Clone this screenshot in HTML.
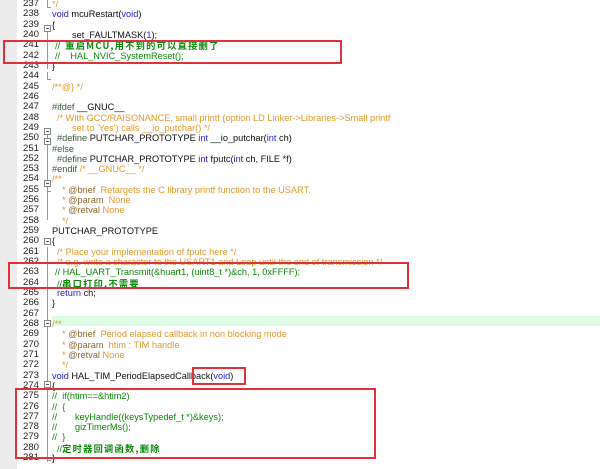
<!DOCTYPE html>
<html><head><meta charset="utf-8"><style>
html,body{margin:0;padding:0;background:#fff;}
body{width:600px;height:469px;position:relative;overflow:hidden;font-family:"Liberation Sans","Noto Sans CJK SC",sans-serif;font-size:9.2px;color:#111;}
.g{position:absolute;left:0;top:0;width:17px;height:469px;background:#ececec;}
.l{position:absolute;left:0;height:10.32px;line-height:10.32px;white-space:pre;}
.n{position:absolute;left:0;width:39px;text-align:right;color:#222;font-size:9.6px}
.c{position:absolute;}
.k{color:#1f1fd0}.o{color:#e29a2a}.gr{color:#0a8a0a}.p{color:#8a6a2a}.pp{color:#3a5a3a}
.cn{font-family:"Noto Sans CJK SC",sans-serif;font-weight:bold;letter-spacing:1.3px}
.box{position:absolute;border:2px solid #e0303a;box-sizing:border-box;}
.fb{position:absolute;left:44px;width:7px;height:7px;border:1px solid #888;box-sizing:border-box;background:#fff;}
.fb:after{content:"";position:absolute;left:1px;top:2px;width:3px;height:1px;background:#555;}
.vl{position:absolute;left:47px;width:1px;background:#999;}
</style></head><body>
<div class="g"></div>
<div style="position:absolute;left:52px;top:316px;width:548px;height:10px;background:#dcfce4"></div>
<div class="vl" style="top:0;height:8px"></div>
<div class="vl" style="top:30px;height:39px"></div>
<div class="vl" style="top:72px;height:8px"></div>
<div class="vl" style="top:133px;height:58px"></div>
<div class="vl" style="top:174px;height:46px"></div>
<div class="vl" style="top:247px;height:215px"></div>
<div style="position:absolute;left:47px;top:7px;width:4px;height:1px;background:#999"></div>
<div style="position:absolute;left:47px;top:79px;width:4px;height:1px;background:#999"></div>
<div style="position:absolute;left:47px;top:191px;width:4px;height:1px;background:#999"></div>
<div style="position:absolute;left:47px;top:460px;width:4px;height:1px;background:#999"></div>
<div class="fb" style="top:25px"></div>
<div class="fb" style="top:128px"></div>
<div class="fb" style="top:138px"></div>
<div class="fb" style="top:180px"></div>
<div class="fb" style="top:238px"></div>
<div class="fb" style="top:320px"></div>
<div class="fb" style="top:381px"></div>

<div class="l" style="top:-1px"><span class="n">237</span><span class="c o" style="left:52px">*/</span></div>
<div class="l" style="top:9.3px"><span class="n">238</span><span class="c" style="left:52px"><span class="k">void</span> mcuRestart(<span class="k">void</span>)</span></div>
<div class="l" style="top:19.6px"><span class="n">239</span><span class="c" style="left:52px">{</span></div>
<div class="l" style="top:30px"><span class="n">240</span><span class="c" style="left:72px">set_FAULTMASK(<span class="k">1</span>);</span></div>
<div class="l" style="top:40.3px"><span class="n">241</span><span class="c gr" style="left:55px">//  <span class="cn">重启MCU,用不到的可以直接删了</span></span></div>
<div class="l" style="top:50.6px"><span class="n">242</span><span class="c gr" style="left:55px">//    HAL_NVIC_SystemReset();</span></div>
<div class="l" style="top:60.9px"><span class="n">243</span><span class="c" style="left:52px">}</span></div>
<div class="l" style="top:71.2px"><span class="n">244</span></div>
<div class="l" style="top:81.6px"><span class="n">245</span><span class="c o" style="left:52px">/**@} */</span></div>
<div class="l" style="top:91.9px"><span class="n">246</span></div>
<div class="l" style="top:102.2px"><span class="n">247</span><span class="c" style="left:52px"><span class="pp">#ifdef</span> __GNUC__</span></div>
<div class="l" style="top:112.5px"><span class="n">248</span><span class="c o" style="left:57px">/* With GCC/RAISONANCE, small printf (option LD Linker-&gt;Libraries-&gt;Small printf</span></div>
<div class="l" style="top:122.8px"><span class="n">249</span><span class="c o" style="left:72px">set to 'Yes') calls __io_putchar() */</span></div>
<div class="l" style="top:133.2px"><span class="n">250</span><span class="c" style="left:57px"><span class="pp">#define</span> PUTCHAR_PROTOTYPE <span class="k">int</span> __io_putchar(<span class="k">int</span> ch)</span></div>
<div class="l" style="top:143.5px"><span class="n">251</span><span class="c pp" style="left:52px">#else</span></div>
<div class="l" style="top:153.8px"><span class="n">252</span><span class="c" style="left:57px"><span class="pp">#define</span> PUTCHAR_PROTOTYPE <span class="k">int</span> fputc(<span class="k">int</span> ch, FILE *f)</span></div>
<div class="l" style="top:164.1px"><span class="n">253</span><span class="c" style="left:52px"><span class="pp">#endif</span> <span class="o">/* __GNUC__ */</span></span></div>
<div class="l" style="top:174.4px"><span class="n">254</span><span class="c o" style="left:52px">/**</span></div>
<div class="l" style="top:184.8px"><span class="n">255</span><span class="c o" style="left:62px">* <span class="p">@brief</span>  Retargets the C library printf function to the USART.</span></div>
<div class="l" style="top:195.1px"><span class="n">256</span><span class="c o" style="left:62px">* <span class="p">@param</span>  None</span></div>
<div class="l" style="top:205.4px"><span class="n">257</span><span class="c o" style="left:62px">* <span class="p">@retval</span> None</span></div>
<div class="l" style="top:215.7px"><span class="n">258</span><span class="c o" style="left:62px">*/</span></div>
<div class="l" style="top:226px"><span class="n">259</span><span class="c" style="left:52px">PUTCHAR_PROTOTYPE</span></div>
<div class="l" style="top:236.4px"><span class="n">260</span><span class="c" style="left:52px">{</span></div>
<div class="l" style="top:246.7px"><span class="n">261</span><span class="c o" style="left:57px">/* Place your implementation of fputc here */</span></div>
<div class="l" style="top:257px"><span class="n">262</span><span class="c o" style="left:57px">/* e.g. write a character to the USART1 and Loop until the end of transmission */</span></div>
<div class="l" style="top:267.3px"><span class="n">263</span><span class="c gr" style="left:55px">// HAL_UART_Transmit(&amp;huart1, (uint8_t *)&amp;ch, 1, 0xFFFF);</span></div>
<div class="l" style="top:277.6px"><span class="n">264</span><span class="c gr" style="left:57px">//<span class="cn">串口打印,不需要</span></span></div>
<div class="l" style="top:288px"><span class="n">265</span><span class="c" style="left:57px"><span class="k">return</span> ch;</span></div>
<div class="l" style="top:298.3px"><span class="n">266</span><span class="c" style="left:52px">}</span></div>
<div class="l" style="top:308.6px"><span class="n">267</span></div>
<div class="l" style="top:318.9px"><span class="n">268</span><span class="c o" style="left:52px">/**</span></div>
<div class="l" style="top:329.2px"><span class="n">269</span><span class="c o" style="left:62px">* <span class="p">@brief</span>  Period elapsed callback in non blocking mode</span></div>
<div class="l" style="top:339.6px"><span class="n">270</span><span class="c o" style="left:62px">* <span class="p">@param</span>  htim : TIM handle</span></div>
<div class="l" style="top:349.9px"><span class="n">271</span><span class="c o" style="left:62px">* <span class="p">@retval</span> None</span></div>
<div class="l" style="top:360.2px"><span class="n">272</span><span class="c o" style="left:62px">*/</span></div>
<div class="l" style="top:370.5px"><span class="n">273</span><span class="c" style="left:52px"><span class="k">void</span> HAL_TIM_PeriodElapsedCallback(<span class="k">void</span>)</span></div>
<div class="l" style="top:380.8px"><span class="n">274</span><span class="c" style="left:52px">{</span></div>
<div class="l" style="top:391.2px"><span class="n">275</span><span class="c gr" style="left:52px">//  if(htim==&amp;htim2)</span></div>
<div class="l" style="top:401.5px"><span class="n">276</span><span class="c gr" style="left:52px">//  {</span></div>
<div class="l" style="top:411.8px"><span class="n">277</span><span class="c gr" style="left:52px">//       keyHandle((keysTypedef_t *)&amp;keys);</span></div>
<div class="l" style="top:422.1px"><span class="n">278</span><span class="c gr" style="left:52px">//       gizTimerMs();</span></div>
<div class="l" style="top:432.4px"><span class="n">279</span><span class="c gr" style="left:52px">//  }</span></div>
<div class="l" style="top:442.8px"><span class="n">280</span><span class="c gr" style="left:57px">//<span class="cn">定时器回调函数,删除</span></span></div>
<div class="l" style="top:453.1px"><span class="n">281</span><span class="c" style="left:52px">}</span></div>

<div class="box" style="left:3px;top:40px;width:339px;height:24px"></div>
<div class="box" style="left:8px;top:262px;width:401px;height:27px"></div>
<div class="box" style="left:192px;top:367px;width:54px;height:18px"></div>
<div class="box" style="left:15px;top:388px;width:361px;height:71px"></div>
</body></html>
